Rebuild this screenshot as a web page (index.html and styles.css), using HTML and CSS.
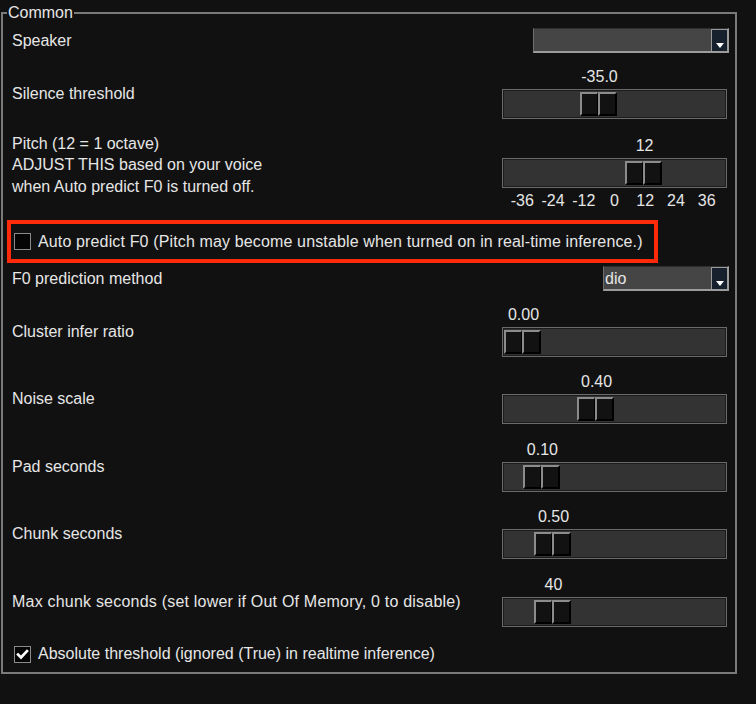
FILE: index.html
```html
<!DOCTYPE html>
<html>
<head>
<meta charset="utf-8">
<link rel="stylesheet" href="styles.css">
</head>
<body>
<div class="frame">
  <div class="legend">Common</div>

  <div class="row row-speaker">
    <div class="label">Speaker</div>
    <div class="combo combo-wide"><span class="combo-text"></span><span class="combo-btn"><span class="tri"></span></span></div>
  </div>

  <div class="row row-silence">
    <div class="label">Silence threshold</div>
    <div class="slider" style="--pos: 0.413">
      <div class="slider-value"><span>-35.0</span></div>
      <div class="trough"><div class="thumb"><span></span><span></span></div></div>
    </div>
  </div>

  <div class="row row-pitch">
    <div class="label label-multi">Pitch (12 = 1 octave)<br>ADJUST THIS based on your voice<br>when Auto predict F0 is turned off.</div>
    <div class="slider" style="--pos: 0.658">
      <div class="slider-value"><span>12</span></div>
      <div class="trough"><div class="thumb"><span></span><span></span></div></div>
      <div class="ticks"><span>-36</span><span>-24</span><span>-12</span><span>0</span><span>12</span><span>24</span><span>36</span></div>
    </div>
  </div>

  <div class="highlight">
    <div class="check-row">
      <span class="checkbox"></span>
      <span class="check-label wide">Auto predict F0 (Pitch may become unstable when turned on in real-time inference.)</span>
    </div>
  </div>

  <div class="row row-f0">
    <div class="label">F0 prediction method</div>
    <div class="combo combo-narrow"><span class="combo-text">dio</span><span class="combo-btn"><span class="tri"></span></span></div>
  </div>

  <div class="row row-slider first-slider">
    <div class="label">Cluster infer ratio</div>
    <div class="slider" style="--pos: 0">
      <div class="slider-value"><span>0.00</span></div>
      <div class="trough"><div class="thumb"><span></span><span></span></div></div>
    </div>
  </div>

  <div class="row row-slider gap-a">
    <div class="label">Noise scale</div>
    <div class="slider" style="--pos: 0.397">
      <div class="slider-value"><span>0.40</span></div>
      <div class="trough"><div class="thumb"><span></span><span></span></div></div>
    </div>
  </div>

  <div class="row row-slider gap-b">
    <div class="label">Pad seconds</div>
    <div class="slider" style="--pos: 0.103">
      <div class="slider-value"><span>0.10</span></div>
      <div class="trough"><div class="thumb"><span></span><span></span></div></div>
    </div>
  </div>

  <div class="row row-slider gap-a">
    <div class="label">Chunk seconds</div>
    <div class="slider" style="--pos: 0.163">
      <div class="slider-value"><span>0.50</span></div>
      <div class="trough"><div class="thumb"><span></span><span></span></div></div>
    </div>
  </div>

  <div class="row row-slider gap-b">
    <div class="label wider">Max chunk seconds (set lower if Out Of Memory, 0 to disable)</div>
    <div class="slider" style="--pos: 0.163">
      <div class="slider-value"><span>40</span></div>
      <div class="trough"><div class="thumb"><span></span><span></span></div></div>
    </div>
  </div>

  <div class="check-row check-bottom">
    <span class="checkbox checked"><svg width="15" height="15" viewBox="0 0 15 15"><path d="M3 7.5 L6 10.5 L12 4" fill="none" stroke="#ffffff" stroke-width="2.6" stroke-linecap="square"/></svg></span>
    <span class="check-label">Absolute threshold (ignored (True) in realtime inference)</span>
  </div>
</div>
</body>
</html>
```

FILE: styles.css
```css
html, body {
  margin: 0;
  padding: 0;
  background: #111111;
}
body {
  width: 756px;
  height: 704px;
  overflow: hidden;
  font-family: "Liberation Sans", Arial, sans-serif;
  font-size: 16px;
  color: #e6e6e6;
}
.frame {
  position: relative;
  box-sizing: border-box;
  margin: 12px 0 0 1px;
  width: 736px;
  height: 662px;
  border: 2px solid #7a7a7a;
  padding: 14px 6px 0 9px;
  display: flex;
  flex-direction: column;
}
.legend {
  position: absolute;
  top: -10px;
  left: 4px;
  padding: 0 1px;
  line-height: 18px;
  background: #111111;
}
.row {
  display: flex;
  justify-content: space-between;
  align-items: center;
}
.label {
  line-height: 18px;
  white-space: nowrap;
}
.wide { letter-spacing: 0.14px; }
.wider { letter-spacing: 0.21px; }
.label-multi {
  line-height: 21.5px;
  align-self: flex-start;
  margin-top: -4.5px;
}
.row-speaker { height: 25px; }
.row-silence { margin-top: 15px; }
.row-pitch { margin-top: 18px; align-items: flex-start; }
.row-f0 { margin-top: 3px; height: 25px; }
.first-slider { margin-top: 15px; }
.gap-a { margin-top: 16px; }
.gap-b { margin-top: 17px; }

/* combo box */
.combo {
  box-sizing: border-box;
  height: 25px;
  display: flex;
  background: #454545;
  border-top: 1px solid #2e2e2e;
  border-left: 1px solid #6e6e6e;
  border-right: 2px solid #9c9c9c;
  border-bottom: 2px solid #9c9c9c;
}
.combo-wide { width: 196px; }
.combo-narrow { width: 126px; }
.combo-text {
  flex: 1;
  padding: 2px 0 0 1px;
  line-height: 20px;
  color: #e6e6e6;
}
.combo-btn {
  box-sizing: border-box;
  width: 16px;
  height: 22px;
  background: #17212e;
  border-top: 1px solid #9a9a9a;
  border-left: 1px solid #9a9a9a;
  display: flex;
  justify-content: center;
  padding-top: 13px;
}
.tri {
  width: 0;
  height: 0;
  border-left: 4px solid transparent;
  border-right: 4px solid transparent;
  border-top: 5px solid #ffffff;
}

/* slider */
.slider {
  width: 225px;
  margin-right: 2px;
}
.slider-value {
  position: relative;
  height: 21px;
  line-height: 18px;
}
.slider-value span {
  position: absolute;
  top: 0;
  left: calc(21.5px + var(--pos) * 184px);
  transform: translateX(-50%);
  white-space: nowrap;
}
.trough {
  position: relative;
  box-sizing: border-box;
  height: 30px;
  background: #333333;
  border: 1px solid #6a6a6a;
  box-shadow: inset 0 0 0 1px #1c1c1c;
}
.thumb {
  position: absolute;
  top: 2px;
  left: calc(1px + var(--pos) * 184px);
  width: 37px;
  height: 24px;
  display: flex;
}
.thumb span {
  box-sizing: border-box;
  height: 24px;
  background: #121212;
  border-top: 2px solid #8c8c8c;
  border-left: 2px solid #8c8c8c;
  border-bottom: 2px solid #000000;
  border-right: 1px solid #000000;
}
.thumb span:first-child { width: 18px; }
.thumb span:last-child { width: 19px; border-right: 2px solid #000000; }
.ticks {
  margin-top: 4px;
  height: 18px;
  line-height: 18px;
  padding: 0 5px;
  display: grid;
  grid-template-columns: repeat(7, 1fr);
  text-align: center;
}

/* checkboxes */
.highlight {
  box-sizing: border-box;
  margin: 10px 0 0 -5px;
  width: 651px;
  height: 43px;
  border: 4px solid #ff2a0a;
  padding-left: 3px;
  display: flex;
  align-items: center;
}
.check-row {
  display: flex;
  align-items: center;
  height: 20px;
}
.checkbox {
  box-sizing: border-box;
  width: 17px;
  height: 17px;
  border: 1px solid #8a8a8a;
  background: #050505;
  margin-right: 7px;
  display: flex;
  align-items: center;
  justify-content: center;
}
.check-label {
  line-height: 18px;
  white-space: nowrap;
}
.check-bottom {
  margin: 17px 0 0 2px;
}
```
